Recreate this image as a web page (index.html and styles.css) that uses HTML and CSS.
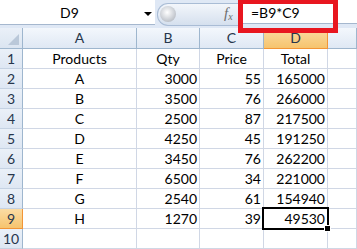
FILE: index.html
```html
<!DOCTYPE html>
<html lang="en">
<head>
    <meta charset="UTF-8">
    <title>Sheet</title>
    <link rel="stylesheet" href="styles.css">
</head>
<body>

<div class="formula-bar">
    <div class="name-box">
        <span class="cell-ref">D9</span>
        <span class="arrow"></span>
    </div>
    <div class="pill">
        <span class="knob"></span>
        <span class="fx">f<sub>x</sub></span>
    </div>
    <div class="formula">=B9*C9</div>
    <div class="highlight"></div>
</div>

<div class="sheet">
    <div class="corner"></div>
    <div class="col-head">A</div>
    <div class="col-head">B</div>
    <div class="col-head">C</div>
    <div class="col-head active">D</div>
    <div class="col-head"></div>

    <div class="row-head">1</div>
    <div class="cell center">Products</div>
    <div class="cell center">Qty</div>
    <div class="cell center">Price</div>
    <div class="cell center">Total</div>
    <div class="cell"></div>

    <div class="row-head">2</div>
    <div class="cell center">A</div>
    <div class="cell num">3000</div>
    <div class="cell num">55</div>
    <div class="cell num">165000</div>
    <div class="cell"></div>

    <div class="row-head">3</div>
    <div class="cell center">B</div>
    <div class="cell num">3500</div>
    <div class="cell num">76</div>
    <div class="cell num">266000</div>
    <div class="cell"></div>

    <div class="row-head">4</div>
    <div class="cell center">C</div>
    <div class="cell num">2500</div>
    <div class="cell num">87</div>
    <div class="cell num">217500</div>
    <div class="cell"></div>

    <div class="row-head">5</div>
    <div class="cell center">D</div>
    <div class="cell num">4250</div>
    <div class="cell num">45</div>
    <div class="cell num">191250</div>
    <div class="cell"></div>

    <div class="row-head">6</div>
    <div class="cell center">E</div>
    <div class="cell num">3450</div>
    <div class="cell num">76</div>
    <div class="cell num">262200</div>
    <div class="cell"></div>

    <div class="row-head">7</div>
    <div class="cell center">F</div>
    <div class="cell num">6500</div>
    <div class="cell num">34</div>
    <div class="cell num">221000</div>
    <div class="cell"></div>

    <div class="row-head">8</div>
    <div class="cell center">G</div>
    <div class="cell num">2540</div>
    <div class="cell num">61</div>
    <div class="cell num">154940</div>
    <div class="cell"></div>

    <div class="row-head active">9</div>
    <div class="cell center">H</div>
    <div class="cell num">1270</div>
    <div class="cell num">39</div>
    <div class="cell num selected">49530</div>
    <div class="cell"></div>

    <div class="row-head">10</div>
    <div class="cell"></div>
    <div class="cell"></div>
    <div class="cell"></div>
    <div class="cell"></div>
    <div class="cell"></div>
</div>

</body>
</html>
```

FILE: styles.css
```css
body {
    margin: 0;
    font-family: Lato, "Liberation Sans", sans-serif;
    font-size: 14px;
    color: #000;
    background-color: #fff;
    overflow: hidden;
}

/* formula bar */
.formula-bar {
    position: relative;
    display: flex;
    height: 28px;
    background: #dfe8f5;
}

.name-box {
    position: relative;
    width: 155px;
    height: 24px;
    background-color: #fff;
    border-bottom: 1px solid #a5b7ce;
}

.cell-ref {
    position: absolute;
    left: 60px;
    top: 4px;
}

.arrow {
    position: absolute;
    left: 144px;
    top: 12px;
    border-left: 4px solid transparent;
    border-right: 4px solid transparent;
    border-top: 4px solid #000;
}

.pill {
    position: relative;
    width: 81px;
    height: 21px;
    margin: 3px 0 0 2px;
    border-radius: 11px 0 0 11px;
    background: linear-gradient(#f3f6fb, #d5e0ee);
    border: 1px solid #a9bcd5;
    border-right: none;
}

.knob {
    position: absolute;
    left: 2px;
    top: 2px;
    width: 16px;
    height: 16px;
    border-radius: 50%;
    background: radial-gradient(circle at 45% 40%, #fff 0, #d6d9de 45%, #a3a9b2 100%);
}

.fx {
    position: absolute;
    left: 66px;
    top: 1px;
    font-family: "Liberation Serif", serif;
    font-style: italic;
    font-size: 15px;
    color: #6d6d6d;
}

.fx sub {
    font-size: 10px;
    vertical-align: -2px;
}

.formula {
    flex: 1;
    height: 24px;
    padding: 4px 0 0 12px;
    box-sizing: border-box;
    background-color: #fff;
    border-bottom: 1px solid #a5b7ce;
}

.highlight {
    position: absolute;
    left: 238px;
    top: -1px;
    width: 100px;
    height: 34px;
    box-sizing: border-box;
    border: 5px solid #e8161f;
}

/* grid */
.sheet {
    display: grid;
    grid-template-columns: 23px 114px 63px 64px 64px 1fr;
    grid-template-rows: 21px repeat(10, 20px);
}

.sheet > div {
    box-sizing: border-box;
    border-right: 1px solid #d0d7e5;
    border-bottom: 1px solid #d0d7e5;
    white-space: nowrap;
    line-height: 19px;
}

.corner {
    position: relative;
    background: linear-gradient(#eaf0f8, #dbe5f1);
}

.corner::after {
    content: "";
    position: absolute;
    right: 3px;
    bottom: 3px;
    border-left: 11px solid transparent;
    border-bottom: 11px solid #bac8d9;
}

.sheet > .corner,
.sheet > .col-head {
    border-right: 1px solid #9eb6ce;
    border-bottom: 1px solid #9eb6ce;
}

.col-head {
    text-align: center;
    color: #27364c;
    line-height: 20px;
    background: linear-gradient(#f3f7fc, #dfe8f4);
}

.sheet > .row-head {
    text-align: center;
    color: #27364c;
    background: linear-gradient(#eaf0f8, #dee7f3);
    border-right: 1px solid #9eb6ce;
    border-bottom: 1px solid #c5d2e3;
}

.sheet > .active {
    background: linear-gradient(#fbdca4, #f6c46e);
    border-color: #f29536;
}

.center {
    text-align: center;
}

.num {
    text-align: right;
    padding-right: 2px;
}

.selected {
    position: relative;
}

.selected::before {
    content: "";
    position: absolute;
    left: -2px;
    top: -2px;
    right: -2px;
    bottom: -2px;
    border: 2px solid #000;
}

.selected::after {
    content: "";
    position: absolute;
    right: -4px;
    bottom: -4px;
    width: 5px;
    height: 5px;
    background-color: #000;
    border: 1px solid #fff;
}
```
